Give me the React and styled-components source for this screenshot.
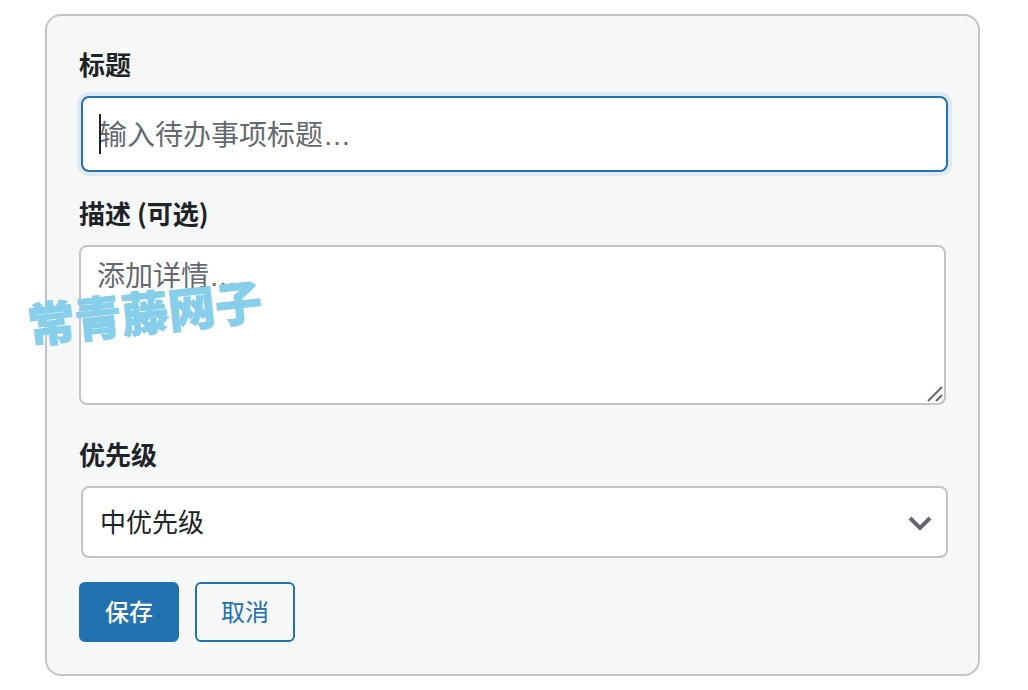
import React from 'react';
import styled, { createGlobalStyle } from 'styled-components';

const App = () => {
    const [title, setTitle] = React.useState('');
    const [detail, setDetail] = React.useState('');
    const [priority, setPriority] = React.useState('medium');

    const onSubmit = (e) => {
        e.preventDefault();
    };

    const onCancel = () => {
        setTitle('');
        setDetail('');
        setPriority('medium');
    };

    return (
        <Page>
            <GlobalStyle />
            <Card onSubmit={onSubmit}>
                <Label htmlFor="todo-title">标题</Label>
                <Field $inset $gap={24}>
                    <TitleInput
                        id="todo-title"
                        type="text"
                        placeholder="输入待办事项标题…"
                        value={title}
                        onChange={(e) => setTitle(e.target.value)}
                    />
                    {title === '' && <Caret />}
                </Field>

                <Label htmlFor="todo-detail">描述 (可选)</Label>
                <Field $gap={32}>
                    <DetailInput
                        id="todo-detail"
                        placeholder="添加详情…"
                        value={detail}
                        onChange={(e) => setDetail(e.target.value)}
                    />
                    <Grip viewBox="0 0 16 16" aria-hidden="true">
                        <path d="M1 15 15 1M9 15l6-6" />
                    </Grip>
                    <Watermark>常青藤网子</Watermark>
                </Field>

                <Label htmlFor="todo-priority">优先级</Label>
                <Field $inset $gap={24}>
                    <PrioritySelect
                        id="todo-priority"
                        value={priority}
                        onChange={(e) => setPriority(e.target.value)}
                    >
                        <option value="high">高优先级</option>
                        <option value="medium">中优先级</option>
                        <option value="low">低优先级</option>
                    </PrioritySelect>
                    <Chevron viewBox="0 0 24 24" aria-hidden="true">
                        <path d="m2 7 10 10L22 7" />
                    </Chevron>
                </Field>

                <Actions>
                    <Button type="submit" $primary>保存</Button>
                    <Button type="button" onClick={onCancel}>取消</Button>
                </Actions>
            </Card>
        </Page>
    );
};

const GlobalStyle = createGlobalStyle`
    * {
        box-sizing: border-box;
    }

    body {
        margin: 0;
        background-color: #fff;
        color: #1d2327;
    }

    body, input, textarea, select, button {
        font-family: "Liberation Sans", "Noto Sans CJK SC", sans-serif;
    }
`;

const Page = styled.main`
    padding: 14px 48px 14px 45px;
`;

const Card = styled.form`
    padding: 31px 32px 32px;
    border: 2px solid #c3c4c7;
    border-radius: 16px;
    background-color: #f6f7f7;
`;

const Label = styled.label`
    display: block;
    margin-bottom: 15px;
    font-family: "Noto Sans CJK SC", sans-serif;
    font-size: 26px;
    font-weight: 600;
    line-height: 34px;
`;

const Field = styled.div`
    position: relative;
    margin: 0 ${(props) => (props.$inset ? '-2px' : '0')} ${(props) => props.$gap}px ${(props) => (props.$inset ? '2px' : '0')};
`;

const TitleInput = styled.input`
    display: block;
    width: 100%;
    height: 76px;
    padding: 4px 16px 0;
    border: 2px solid #2271b1;
    border-radius: 8px;
    outline: none;
    box-shadow: 0 0 0 4px rgba(34, 113, 177, 0.1);
    background-color: #fff;
    color: #1d2327;
    font-size: 28px;

    &::placeholder {
        color: #646970;
        opacity: 1;
    }
`;

const Caret = styled.span`
    position: absolute;
    top: 18px;
    left: 18px;
    width: 2px;
    height: 40px;
    background-color: #1d2327;
    pointer-events: none;
`;

const DetailInput = styled.textarea`
    display: block;
    width: 100%;
    height: 160px;
    padding: 10px 16px;
    border: 2px solid #c3c4c7;
    border-radius: 8px;
    outline: none;
    resize: none;
    background-color: #fff;
    color: #1d2327;
    font-size: 28px;
    line-height: 40px;

    &::placeholder {
        color: #646970;
        opacity: 1;
    }
`;

const Grip = styled.svg`
    position: absolute;
    right: 3px;
    bottom: 3px;
    width: 16px;
    height: 16px;
    fill: none;
    stroke: #646970;
    stroke-width: 2;
    pointer-events: none;
`;

const Watermark = styled.span`
    position: absolute;
    top: 30px;
    left: -52px;
    color: #87ceeb;
    font-family: "Noto Sans CJK SC", sans-serif;
    font-size: 47px;
    font-weight: 900;
    line-height: 72px;
    white-space: nowrap;
    transform: rotate(-6deg);
    -webkit-text-stroke: 1px #87ceeb;
    pointer-events: none;
`;

const PrioritySelect = styled.select`
    display: block;
    width: 100%;
    height: 72px;
    padding: 2px 48px 0 17px;
    border: 2px solid #c3c4c7;
    border-radius: 8px;
    outline: none;
    appearance: none;
    background-color: #fff;
    color: #1d2327;
    font-size: 26px;
`;

const Chevron = styled.svg`
    position: absolute;
    top: 25px;
    right: 16px;
    width: 24px;
    height: 24px;
    fill: none;
    stroke: #646970;
    stroke-width: 4;
    pointer-events: none;
`;

const Actions = styled.div`
    display: flex;
    gap: 16px;
`;

const Button = styled.button`
    height: 60px;
    padding: 0 24px 3px;
    border: 2px solid #2271b1;
    border-radius: 6px;
    background-color: ${(props) => (props.$primary ? '#2271b1' : 'transparent')};
    color: ${(props) => (props.$primary ? '#fff' : '#2271b1')};
    font-size: 24px;
    font-weight: ${(props) => (props.$primary ? 500 : 400)};
    cursor: pointer;
`;

export default App;
